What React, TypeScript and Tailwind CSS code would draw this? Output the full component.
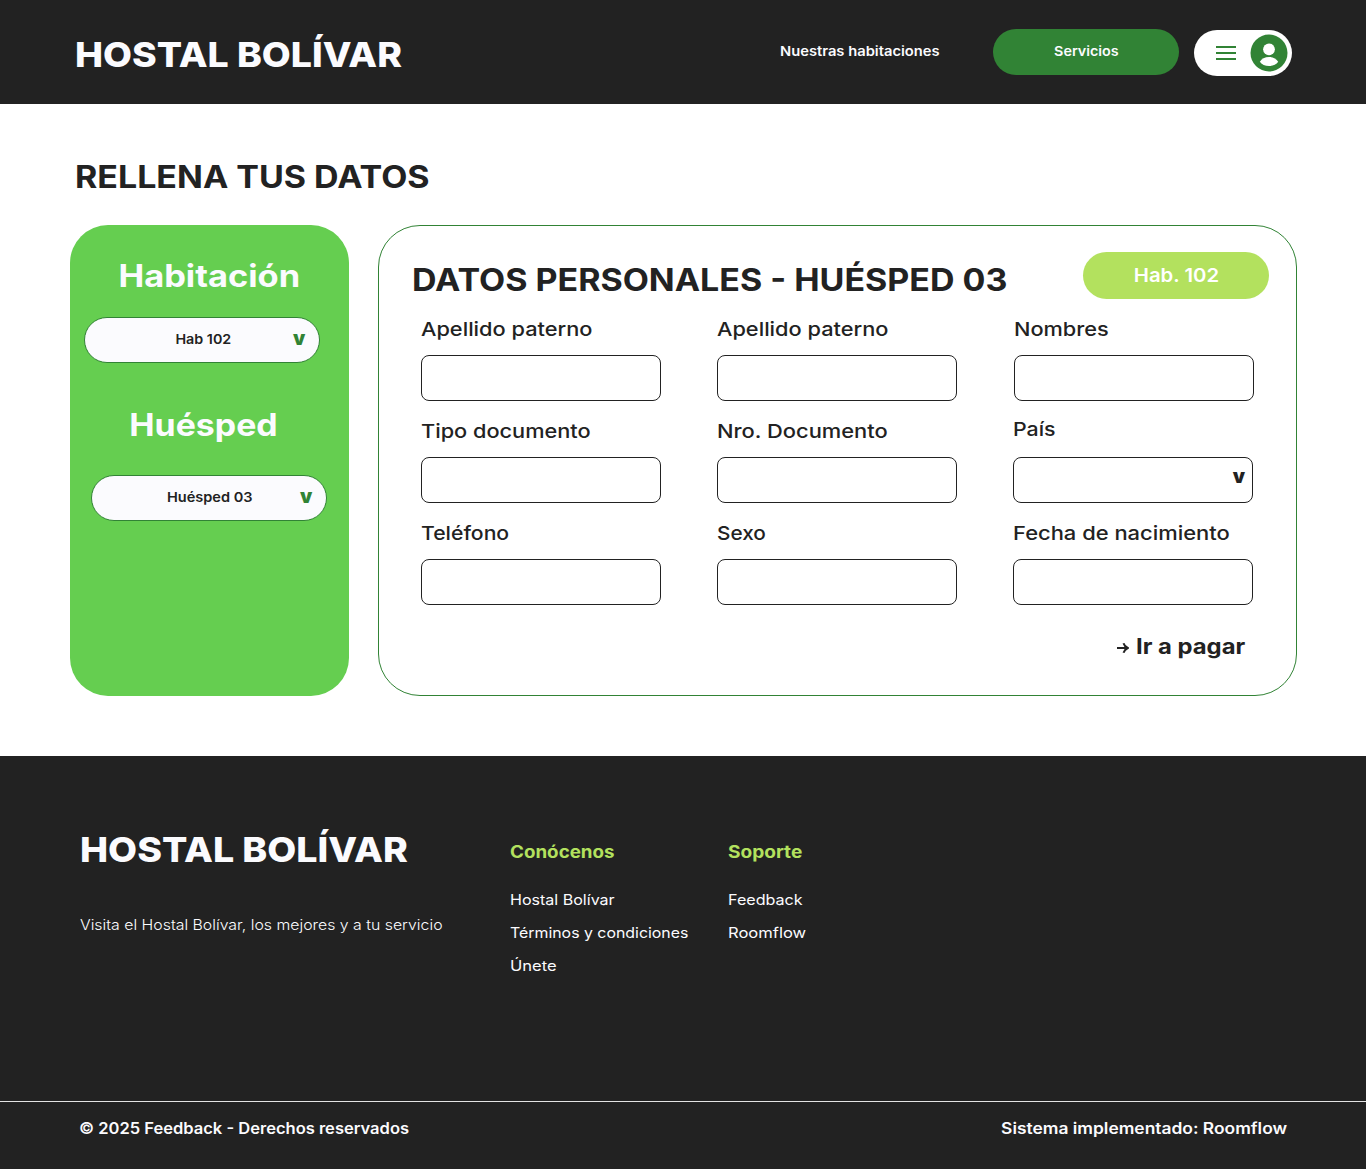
import type { ReactNode } from "react";

/* Single-line text stretched horizontally to a wide geometric look. */
function T({ className, children }: { className: string; children: ReactNode }) {
  return <span className={`inline-block whitespace-nowrap ${className}`}>{children}</span>;
}

type FieldProps = { label: string; scale: string; wrap?: string; labelWrap?: string; select?: boolean };

function Field({ label, scale, wrap = "", labelWrap = "", select = false }: FieldProps) {
  return (
    <label className={`block w-60 ${wrap}`}>
      <span className={`block h-10 text-[19.25px] leading-7 font-medium ${labelWrap}`}>
        <T className={`origin-left ${scale}`}>{label}</T>
      </span>
      <span className="flex h-[46px] w-60 justify-end rounded-lg border border-[#222222] pt-[5px] pr-[7px]">
        {select && (
          <T className="origin-right text-[19.5px] leading-[26px] font-black">v</T>
        )}
      </span>
    </label>
  );
}

function Picker({ children, className, scale }: { children: string; className: string; scale: string }) {
  return (
    <button
      className={`flex h-[46px] w-[236px] items-center rounded-full border border-[#318335] bg-[#fbfbfe] ${className}`}
    >
      <span className="w-[192px] pl-[44px] text-center text-[13.5px] leading-5 font-semibold text-[#222222] -mt-0.5">
        <T className={scale}>{children}</T>
      </span>
      <span className="ml-4 text-[19.5px] leading-5 font-black text-[#318335] -mt-[5px]">v</span>
    </button>
  );
}

function Header() {
  return (
    <header className="flex h-[104px] bg-[#222222] pl-[75px] text-[#fbfbfe]">
      <div className="w-[705px] pt-[34px] text-[34.7px] leading-10 font-extrabold">
        <T className="origin-left scale-x-[1.08]">HOSTAL BOLÍVAR</T>
      </div>
      <a className="w-[213px] pt-[41px] text-[13.5px] leading-5 font-semibold">
        <T className="origin-left scale-x-[1.091]">Nuestras habitaciones</T>
      </a>
      <button className="mt-[29px] h-[46px] w-[186px] rounded-full bg-[#318335] pb-0.5 text-[13.5px] leading-5 font-semibold">
        <T className="scale-x-[1.063]">Servicios</T>
      </button>
      <button className="mt-[30px] ml-[15px] flex h-[46px] w-[98px] items-center rounded-full bg-white pl-[22px]">
        <span className="flex w-5 flex-col gap-1">
          <span className="h-0.5 bg-[#318335]" />
          <span className="h-0.5 bg-[#318335]" />
          <span className="h-0.5 bg-[#318335]" />
        </span>
        <svg className="ml-[14px]" width="38" height="38" viewBox="0 0 38 38">
          <circle cx="19" cy="19" r="18.5" fill="#318335" />
          <circle cx="19" cy="15.3" r="5.9" fill="#fff" />
          <path d="M9.8 27.8C11.6 24.8 15 23 19 23s7.400 1.800 9.200 4.800C26.300 30.600 22.900 32.100 19 32.100s-7.300-1.500-9.200-4.300Z" fill="#fff" />
        </svg>
      </button>
    </header>
  );
}

function Footer() {
  return (
    <footer className="h-[413px] bg-[#222222] text-[#fbfbfe]">
      <div className="flex h-[345px] pl-20">
        <div className="w-[430px] pt-[73px]">
          <div className="h-[81px] text-[34.7px] leading-10 font-extrabold">
            <T className="origin-left scale-x-[1.083]">HOSTAL BOLÍVAR</T>
          </div>
          <p className="pt-1 text-[14.6px] leading-[22px] font-light">
            <T className="origin-left scale-x-[1.086]">Visita el Hostal Bolívar, los mejores y a tu servicio</T>
          </p>
        </div>
        <div className="flex w-[218px] flex-col pt-[84px] text-[14.4px] leading-[33px]">
          <h3 className="mb-[19px] text-[17.3px] leading-6 font-bold text-[#b3e15e]">
            <T className="origin-left scale-x-[1.087]">Conócenos</T>
          </h3>
          <a><T className="origin-left scale-x-[1.115]">Hostal Bolívar</T></a>
          <a><T className="origin-left scale-x-[1.103]">Términos y condiciones</T></a>
          <a><T className="origin-left scale-x-[1.15]">Únete</T></a>
        </div>
        <div className="flex flex-col pt-[84px] text-[14.4px] leading-[33px]">
          <h3 className="mb-[19px] text-[17.3px] leading-6 font-bold text-[#b3e15e]">
            <T className="origin-left scale-x-[1.105]">Soporte</T>
          </h3>
          <a><T className="origin-left scale-x-[1.12]">Feedback</T></a>
          <a><T className="origin-left scale-x-[1.15]">Roomflow</T></a>
        </div>
      </div>
      <div className="flex h-[68px] justify-between border-t border-[#e4e4e4] pt-[15px] pr-[79px] pl-[79px] text-[15.4px] leading-6 font-semibold">
        <T className="origin-left scale-x-[1.073]">© 2025 Feedback - Derechos reservados</T>
        <T className="origin-right scale-x-[1.13]">Sistema implementado: Roomflow</T>
      </div>
    </footer>
  );
}

export default function App() {
  return (
    <div className="w-[1366px] bg-white font-['Inter',sans-serif] text-[#222222]">
      <Header />
      <main className="h-[652px] pt-[53px] pl-[70px]">
        <h1 className="h-[68px] pl-[5px] text-[30.8px] leading-10 font-bold">
          <T className="origin-left scale-x-[1.103]">RELLENA TUS DATOS</T>
        </h1>
        <div className="flex gap-[29px]">
          <aside className="h-[471px] w-[279px] rounded-[38px] bg-[#65ce50] pt-[31px]">
            <h2 className="h-[61px] text-center text-[30.8px] leading-10 font-bold text-[#fbfbfe]">
              <T className="scale-x-[1.118]">Habitación</T>
            </h2>
            <Picker className="ml-[14px]" scale="scale-x-[1.06]">Hab 102</Picker>
            <h2 className="mt-[42px] h-[70px] pr-[13px] text-center text-[30.8px] leading-10 font-bold text-[#fbfbfe]">
              <T className="scale-x-[1.1]">Huésped</T>
            </h2>
            <Picker className="ml-[21px]" scale="scale-x-[1.078]">Huésped 03</Picker>
          </aside>
          <section className="h-[471px] w-[919px] rounded-[42px] border border-[#318335] pt-[26px] pl-8">
            <div className="flex h-[63px] justify-between pr-[27px]">
              <h2 className="pt-2 pl-px text-[30.8px] leading-10 font-bold">
                <T className="origin-left scale-x-[1.103]">DATOS PERSONALES - HUÉSPED 03</T>
              </h2>
              <div className="h-[47px] w-[186px] rounded-full bg-[#b3e15e] pt-[9px] text-center text-[19.25px] leading-7 font-semibold text-white">
                <T className="scale-x-[1.056]">Hab. 102</T>
              </div>
            </div>
            <div className="ml-[10px] grid grid-cols-[296px_296px_241px] gap-y-4">
              <Field label="Apellido paterno" scale="scale-x-[1.13]" />
              <Field label="Apellido paterno" scale="scale-x-[1.13]" />
              <Field label="Nombres" scale="scale-x-[1.129]" wrap="ml-px" />
              <Field label="Tipo documento" scale="scale-x-[1.129]" />
              <Field label="Nro. Documento" scale="scale-x-[1.136]" />
              <Field label="País" scale="scale-x-[1.107]" wrap="-mt-0.5" labelWrap="mb-0.5" select />
              <Field label="Teléfono" scale="scale-x-[1.1]" />
              <Field label="Sexo" scale="scale-x-[1.078]" />
              <Field label="Fecha de nacimiento" scale="scale-x-[1.139]" />
            </div>
            <div className="mt-[27px] flex items-center justify-end pr-[50px] text-[21.2px] leading-7 font-bold">
              <svg className="mt-1 mr-[7px]" width="12" height="12" viewBox="0 0 12 12" fill="none" stroke="#222222" strokeWidth="2">
                <path d="M0 6h10M6.500 1.200Q7.500 4.500 10.800 6Q7.500 7.500 6.500 10.800" />
              </svg>
              <span className="w-[110px]">
                <T className="origin-left scale-x-[1.125]">Ir a pagar</T>
              </span>
            </div>
          </section>
        </div>
      </main>
      <Footer />
    </div>
  );
}
